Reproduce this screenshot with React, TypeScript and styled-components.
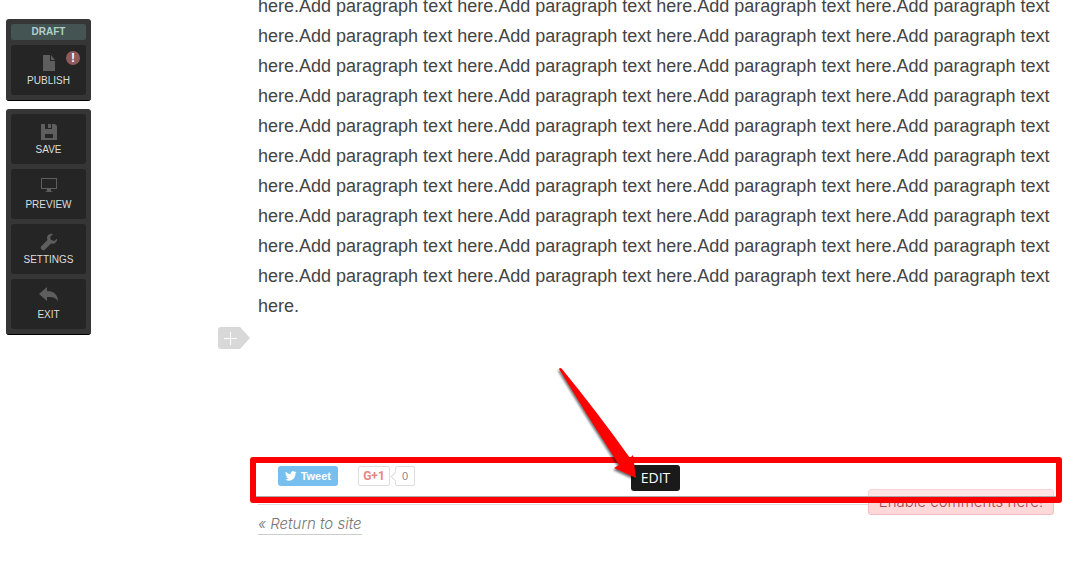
import React from "react";
import styled, { createGlobalStyle } from "styled-components";

const GlobalStyle = createGlobalStyle`
  * { box-sizing: border-box; }
  body {
    margin: 0;
    background: #fff;
    color: #444;
    font-family: "Liberation Sans", Arial, sans-serif;
    overflow: hidden;
  }
  button { font-family: inherit; cursor: pointer; }
`;

const Page = styled.div`
  display: flex;
  align-items: flex-start;
  gap: 167px;
  padding: 0 34px 0 6px;
`;

const Sidebar = styled.nav`
  flex: none;
  width: 85px;
  display: flex;
  flex-direction: column;
  gap: 8px;
  padding-top: 19px;
`;

const Panel = styled.div`
  display: flex;
  flex-direction: column;
  gap: 5px;
  padding: 5px;
  background: #363636;
  border-bottom: 1px solid #000;
  border-radius: 3px;
`;

const Status = styled.div`
  height: 16px;
  line-height: 16px;
  border-radius: 2px;
  background: #435453;
  color: #b4cfcb;
  font-size: 10px;
  font-weight: bold;
  text-align: center;
`;

const Tool = styled.button`
  position: relative;
  display: flex;
  flex-direction: column;
  align-items: center;
  gap: 2px;
  height: 50px;
  padding: 8px 0 0;
  border: 0;
  border-radius: 3px;
  background: #252525;
  color: #ddd;
  font-size: 10px;
  line-height: 12px;
`;

const ToolIcon = styled.svg`
  width: 20px;
  height: 20px;
  fill: #5e5e5e;
`;

const Alert = styled.span`
  position: absolute;
  top: 6px;
  right: 6px;
  width: 14px;
  height: 14px;
  border-radius: 50%;
  background: #8f5a5c;
  color: #fff;
  font-size: 12px;
  font-weight: bold;
  line-height: 14px;
  text-align: center;
`;

const Main = styled.main`
  position: relative;
  flex: 1;
  min-width: 0;
`;

const Paragraph = styled.p`
  margin: -9px 0 0;
  font-size: 18px;
  line-height: 30px;
`;

const AddSection = styled.button`
  display: block;
  width: 32px;
  height: 22px;
  margin: 6px 0 0 -40px;
  padding: 0;
  border: 0;
  background: none;
`;

const Footer = styled.footer`
  margin-top: 108px;
`;

const ShareRow = styled.section`
  position: relative;
  display: flex;
  align-items: flex-start;
  height: 48px;
  padding: 9px 0 0 20px;
  border-bottom: 1px solid #ddd;
`;

const Tweet = styled.button`
  z-index: 1;
  display: flex;
  align-items: center;
  gap: 4px;
  width: 60px;
  height: 20px;
  margin-right: 20px;
  padding: 0 7px;
  border: 0;
  border-radius: 3px;
  background: #76bfee;
  color: #fff;
  font-size: 11px;
  font-weight: bold;
`;

const PlusOne = styled.button`
  z-index: 1;
  width: 32px;
  height: 20px;
  padding: 0;
  border: 1px solid #ddd;
  border-radius: 2px;
  background: #fff;
  color: #e88680;
  font-family: Roboto, sans-serif;
  font-size: 12px;
  font-weight: bold;
  line-height: 18px;
`;

const Count = styled.span`
  z-index: 1;
  position: relative;
  width: 20px;
  height: 20px;
  margin-left: 5px;
  border: 1px solid #ddd;
  border-radius: 2px;
  color: #888;
  font-size: 11px;
  line-height: 18px;
  text-align: center;

  &::before {
    content: "";
    position: absolute;
    left: -4px;
    top: 6px;
    width: 6px;
    height: 6px;
    border: solid #ddd;
    border-width: 0 0 1px 1px;
    background: #fff;
    transform: rotate(45deg);
  }
`;

const EditButton = styled.button`
  position: absolute;
  left: 50%;
  top: 8px;
  margin-left: -25px;
  width: 49px;
  height: 26px;
  padding: 0;
  border: 0;
  border-radius: 3px;
  background: #1a1a1a;
  color: #fff;
  font-family: "Open Sans", sans-serif;
  font-size: 14px;
  line-height: 26px;
`;

const Comments = styled.button`
  position: absolute;
  right: 0;
  top: 32px;
  width: 186px;
  height: 26px;
  padding: 0;
  border: 1px solid #efbdbd;
  border-radius: 3px;
  background: #ffd9d9;
  color: #a8444e;
  font-family: Inter, sans-serif;
  font-size: 15px;
  font-weight: 300;
  line-height: 24px;
`;

const Highlight = styled.div`
  position: absolute;
  left: -8px;
  right: -8px;
  top: 0;
  height: 46px;
  border: 6px solid #f00;
  border-radius: 3px;
  background: rgba(255, 255, 255, 0.35);
  box-shadow: inset 0 -1px 0 #aaa;
  pointer-events: none;
`;

const Arrow = styled.svg`
  position: absolute;
  left: 50%;
  bottom: 18px;
  margin-left: -104px;
  width: 90px;
  height: 120px;
  overflow: visible;
  filter: drop-shadow(-1px 2px 1px rgba(0, 0, 0, 0.55));
  pointer-events: none;
`;

const ReturnLink = styled.a`
  display: inline-block;
  height: 20px;
  margin-top: 10px;
  border-bottom: 1px solid #ccc;
  color: #777;
  font-family: Inter, sans-serif;
  font-size: 15px;
  font-style: italic;
  font-weight: 300;
  line-height: 18px;
  text-decoration: none;
`;

const PHRASE = "Add paragraph text here.";

const tools = [
  { name: "SAVE", art: <path fillRule="evenodd" d="M2 2h4v5h7V2h3l2 2v14h-4v-6H6v6H2zM9 2h3v4H9zM6 16h8v2H6z" /> },
  { name: "PREVIEW", art: <path fillRule="evenodd" d="M2 1h16v11h-6v2l2 1H6l2-1v-2H2zM3 2v9h14V2z" /> },
  { name: "SETTINGS", art: <path d="M18 6.500 15.500 9 12 8l-1-3 3-3c-3-1-6 1-6 4l.5 2L2 14.500c-1 2 1.500 4.500 3.500 3.500L12 11.500c3 1 6.500-1 6-5z" /> },
  { name: "EXIT", art: <path d="M0 7 8 0v4c7 0 11 4 11 10-3-4-6-4-11-4v4z" /> },
];

export default function App() {
  return (
    <>
      <GlobalStyle />
      <Page>
        <Sidebar aria-label="Editor">
          <Panel>
            <Status>DRAFT</Status>
            <Tool type="button">
              <ToolIcon viewBox="0 0 20 20" aria-hidden="true">
                <path d="M4 2h7v6h5v10H4zM12 2l4 5h-4z" />
              </ToolIcon>
              PUBLISH
              <Alert>!</Alert>
            </Tool>
          </Panel>
          <Panel>
            {tools.map((tool) => (
              <Tool type="button" key={tool.name}>
                <ToolIcon viewBox="0 0 20 20" aria-hidden="true">{tool.art}</ToolIcon>
                {tool.name}
              </Tool>
            ))}
          </Panel>
        </Sidebar>
        <Main>
          <Paragraph>here.{PHRASE.repeat(40)}</Paragraph>
          <AddSection type="button" aria-label="Add section">
            <svg width="32" height="22" viewBox="0 0 32 22" aria-hidden="true">
              <path d="M3 0h19l10 11-10 11H3q-3 0-3-3V3q0-3 3-3z" fill="#d8d8d8" />
              <path d="M12.500 5v13M6 11.500h13" stroke="#fff" />
            </svg>
          </AddSection>
          <Footer>
            <ShareRow>
              <Tweet type="button">
                <svg width="12" height="10" viewBox="0 0 24 20" fill="#fff" aria-hidden="true">
                  <path d="M24 2.400a10 10 0 0 1-2.800.8A5 5 0 0 0 23.300.5a10 10 0 0 1-3.100 1.200 4.900 4.900 0 0 0-8.400 4.500A14 14 0 0 1 1.700 1a4.900 4.900 0 0 0 1.500 6.600A5 5 0 0 1 1 7a4.900 4.900 0 0 0 4 4.800 5 5 0 0 1-2.200.1 4.900 4.900 0 0 0 4.600 3.400A10 10 0 0 1 0 17.300 14 14 0 0 0 21.500 4.900 10 10 0 0 0 24 2.400z" />
                </svg>
                Tweet
              </Tweet>
              <PlusOne type="button">G+1</PlusOne>
              <Count>0</Count>
              <Comments type="button">Enable comments here!</Comments>
              <Highlight />
              <EditButton type="button">EDIT</EditButton>
              <Arrow viewBox="0 0 90 120" aria-hidden="true">
                <path d="M7 3Q8 1 10 3Q46 47 78 92L81 89L84 112L62 102L67 99Q36 51 7 3z" fill="#f00" />
              </Arrow>
            </ShareRow>
            <ReturnLink href="#">« Return to site</ReturnLink>
          </Footer>
        </Main>
      </Page>
    </>
  );
}
